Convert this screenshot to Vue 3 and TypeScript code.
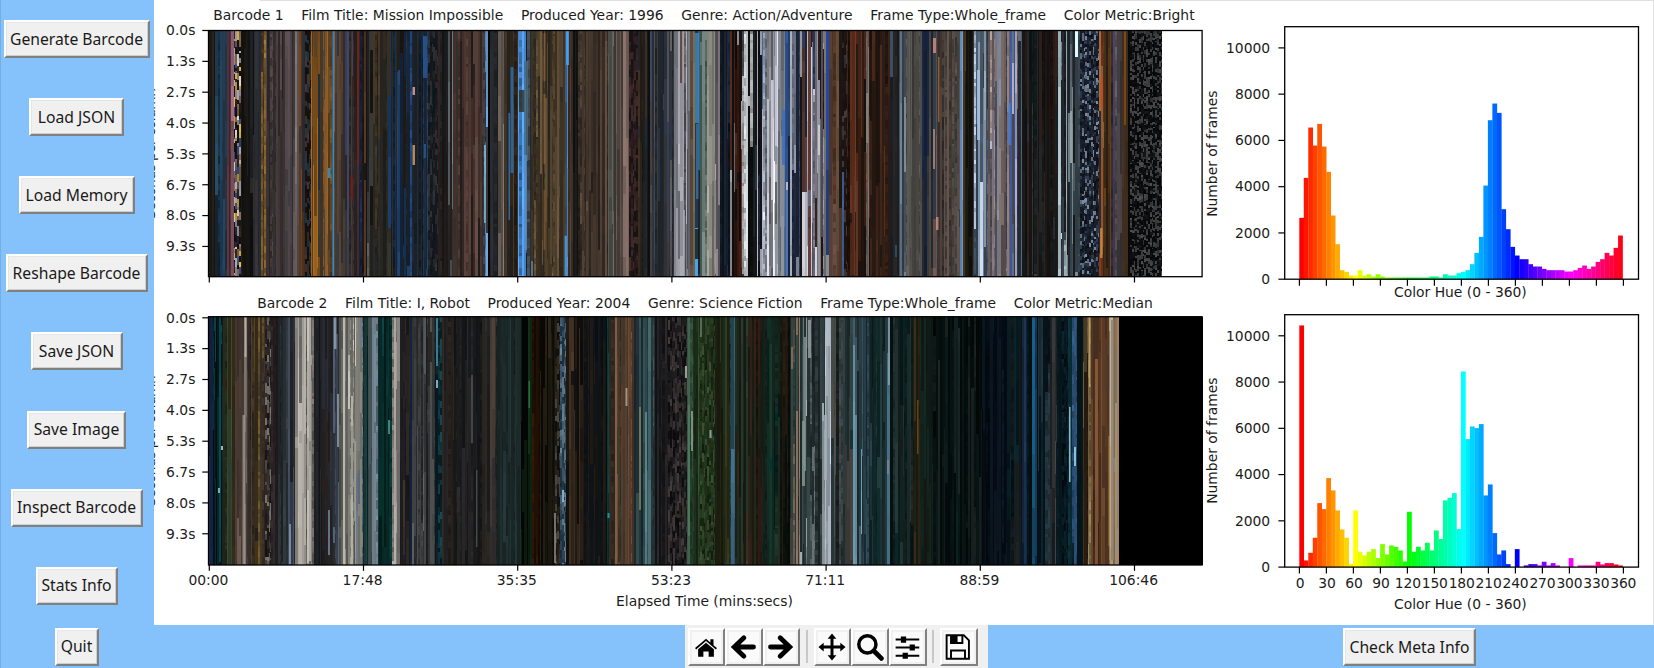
<script setup lang="ts">
interface Cell { x: number; y: number; w: number; h: number; c: string }
type Patch = [number, number, number, number, string]

const actions = ['Generate Barcode', 'Load JSON', 'Load Memory', 'Reshape Barcode', 'Save JSON', 'Save Image', 'Inspect Barcode', 'Stats Info', 'Quit']
const widths = [146, 95, 116, 142, 92, 99, 132, 82, 44]

const secs = ['0.0s', '1.3s', '2.7s', '4.0s', '5.3s', '6.7s', '8.0s', '9.3s']
const times = ['00:00', '17:48', '35:35', '53:23', '71:11', '88:59', '106:46']
const timeX = (i: number) => 209 + i * 154.2

// Each zone: right edge, palette, optional texture (n = flickering, d = dotted, z = static)
const zonesA = `215 1c1a17 221c14;222 1b3246 14202a 1f4058;227 24303c 1c3a55;231 553038 46303a;233.5 60404a 8a5a70;241 cfc0b0 111111 7a6050 3a4a70 c8a840 2a2025 14141a 9a98a8 n;248 15130f 1d1a18;255 22252b 2f2c2c 111111;261 2d2d33 262a30;266 6b5129 7a5c2a 3c3228;283 3f3536 352c2a 4a3f42 393436;293 4b4144 42393c 403a3e;299 66605f 50484a;305 432c1c 2a2a30 5c3518;311 3a3030 24303c 151110 n;318 a0651f 8a5418 6c4a24;325 6b4826 4a4238 7a4a1c 24303c;332 7b5228 6a4a2a 8a5c24;334 2d6a92 2a5878;343 4a3c32 2c3440 6a4a34;353 35302c 3a3d5a 2a2624;360 5a2520 40201c 302830 3a2c2c;362 26407a 203050;367 4a3020 1a1614;373 1a1c1c 2a2a28 4a4a48;387 262420 33302a 1e2428 3c3020;397 1c2530 2c2c20 1a3050 2c2820;407 162c48 1c3b60 201c1a 2c2820;423 14202e 1c3a64 20242a 1a2634;428 2a5080 1c2a3a;438 101820 1a1c20 2a2c30 n;448 241e1a 2a1c18 1c1f22;453 4a4644 586266 2a2826;483 3a2a24 4a3430 2a2622 55403a;488 5a80a8 30343c;490 0a0a0a;498 1e2226 26282c;504 6a6058 4a443e;518 332a20 2c2824 3e3226;526 4a90dc 458ad2 5898e0;533 4a5a68 2c2822 2c2822;565 4a3c28 3c3020 5a4a34 2c2820;568 4f82c8 4a6888;573 44362c;578 0d0f0f 151514;608 4b3c32 54443a 3c3028 5c4c3a;617 5a5e56 66605a 4a443e;623 4a403c;629 806a60 6c5a54;638 2a1a1c 181416 3a2626 n;648 33281c 202428;650 0c0c0c;674 3a3a3e 2a3038 4a4648 2f3a4c;690 8a8a90 9a9aa4 6a6c74;695 5a5440 5c4a40;700 3a80b4 2a5878 203040;707 6a7a74 50645c;715 7a7c74 8a8a80;720 4a4a50 8c8088;730 142030 1e2c3c 101820;742 2c140e 50281c 101012 8a8a8c;748 9a9ea0 c0c4c6 3a4448;755 101412 d0d4d4 141c1a;762 2a3040 90949c 14141c;767 8a92a0 b0b8c8 4a80a8;778 a8acb4 d0d0dc 7a7c84;785 808690 a0a8b4;792 2a4a80 14203c 9aa0ac;800 3a4a6a 8a92a4 1c2436 606878;815 6a6a78 a0a0ac 503430 2c3858 c0c0c8 1c1a20;826 2a1c1a 8a8890 b8b8c4 5a5a66;829 2a4a90 889098;833 5a4038 402c22;842 4a3020 5a4438 2c2018;847 1c1412 1c1412 3a3434 n;866 4a2416 3a1c10 5a3424 241610;869 7a706c 604a44;890 4a2a1c 281a12 3a2218 18110e;900 1c2026 3a5068 282624;906 6a7884 3a4450;922 44423f 4a4844;931 1c2c4a 1a3a68 2a2c34 44403c;938 5a4a44 2c3440;960 484440 4e4642 403c38 54443e;963 5a7ca8;966 5a4a20 302818;973 141210 242018;988 8aa0bc 5a7088 a8b4c4 3c4854;1010 6a6268 8a7a74 4a4448 808aa0 5a5054;1022 3a4a80 4a5a70 8a8a98 383c44;1058 141414 1c1e20 2a1c18 101a1c 222424 30302e;1080 3c4e58 6a7880 a8bcc4 2a3238 1c2024;1099 1c2430 0e1218 6c7c90 2c3c50 141a28 1a1c28 d;1104 b87a48 5a3018 8a4020 3a2c2c;1111 5a3a14 3a2a18;1115 3c3448 2c3048;1122 5a5458 484448;1128 7a4a1a 3a2a1c;1130 0a0a0a;1161.5 060809 101416 0a0c0e 3a3a3a 444444 z`
const zonesB = `212.5 1c2c58 142040;223 041418 06282c 0a3a3c 021012;227 3a2a1c 20301c;235 3c3a20 2a3a2c 2a2818;242 3a2e28 584a42;247 4a4038 706860 403830;252 4a4038 3a302c;265 5a4624 463a24 3a3028;271 1a1616 4a4440 302c28 706a64 2a2422 n;278 2a2224 3a3438;288 20262a 2c3236;295 2a2c30 3c4656;314 8a8880 a8a49c 989490 6e6c68;320 1a1c20 1c1e22;333 1e1c1c 24262c 2a1e14;339 22262c 4a5668;343 4a4c48 5a5c58;356 8e8c82 a4a298 70706a 7c7b75;363 5a6270 6e6e68;368 0a2a2a 1a3c3c;372 505a5c 405050;377.5 8fa6b8 a0b4c0;392 062420 0a302e 0c3a38;400 6c6a66 8a8480;410 2c2624 1a1a1c;412 16284a;435 3c3e40 303234 4c4e50 2a2826;438 0a2228 1c3038;442 0c3038 14404c 0a2228 081c20 n;453 28221e 202022;485 1c1e20 24221f 18191c 2a2a2c;497 28282a 242220 3a322c;521 1c2a2a 203232 1a2424;528 020604 0a1a0c;532 123018 0a1c10;540 2a1404 1c0e04;555 14140c 261e14 0c0a06;560 2c2418 101010 40403a 201c16 n;566 3a5468 5c7484 1c3040 283c4c n;583 241c14 3a2c20 141210;607 101214 1a1612 0c1014;609 083834 062824;615 28201c 302820;634 5c4230 503c2e 6a4c38 4a4030;643 1c2a30 2c4040;654 3c5c60 4a6c70 2a4448;662 16181a 222224;668 1a1a1c 242222;687 1a1a1c 302a2a 0e0e10 3a3434 1e1c1e n;693 3c5c48 2a4834;700 1c3018 2c4424 203420;715 1c3018 243c20 142010 34482c 26341c n;730 2a2a14 1c1e10 22301c;735 33556a 1c2c2c 203c44;750 182018 202c20 33281c;762 2a1a14 1c1c14 1a2418;780 0a1c18 14241c 063028 1c2c20;790 1a1c10 0c1410 2c2014;800 6a5c50 4a4a44 2a3a36;815 2c3a3c 8a9898 1c2628 5a6868;825 303c3e a0acac 38444a 202c2c;831 a8b4c0 c0c8d4 2c3434;853 1c2a2c 2c3c3e 4a4c46 3c3836;863 5c8494 3a5058 203034;873 1c3038 28404a 142226;887 0c2020 1a2c2e;890 3c5a6c 24303c;913 06181a 0a2424 14201e 20302e;920 2c2414 1a1c14;933 14241c 0c1c18 1c1a16 162c24;983 061412 0a1c1a 040c0c 182020 040a08;1007 040a14 06101c 0a141c;1022 06181c 0a242c 1a2022;1027 1c2c48 10243c;1032 041418;1037 14486a 1a5274 103c58;1050 0a1c24 1c2c34 061018;1057 3a4042 28282a 142028;1062 061820 081c24;1068 040c12 0a2028 061820 n;1072 0a2830 10303c;1077 2a5888 3a6a9c 0c2434;1083 041418;1088 4a3c28 2a1c10 786848;1091 9a885c 786440;1109 5c3c24 4a3020 6a462c 3c2a1c;1118.5 8a7a64 a89c88 9a7a54;1202 000000`

const patchesA: Patch[] = [
  [412.5, 87, 2.5, 8, '#e0a8a8'], [412.5, 145, 2.5, 20, '#d0a070'], [510.5, 67, 3, 106, '#2f6fac'], [508.5, 113, 1.5, 107, '#3a74b0'],
  [519, 90, 6, 22, '#333026'], [524, 61, 4, 100, '#4a6a80'], [524, 155, 3, 95, '#5a8cc4'], [543.5, 33, 2, 48, '#8a5c38'], [543.5, 94, 2, 70, '#84603c'],
  [543.5, 190, 2, 60, '#7a5230'], [566, 31, 3, 34, '#4ea4ec'], [564.5, 236, 2.5, 40, '#4b98da'], [695, 33, 4, 90, '#4386b4'], [696, 124, 2.5, 75, '#3a7298'],
  [695, 229, 4, 30, '#191a18'], [484, 145, 2, 78, '#88bcd0'], [423, 36, 4, 42, '#2a5a98'], [350.5, 175, 2.5, 25, '#6c2014'], [328, 168, 2.5, 10, '#3098d8'],
  [1008.5, 103, 2, 42, '#3f86e8'], [977, 70, 3, 70, '#a9c4ec'], [978, 140, 2, 90, '#7894b4'], [1100.5, 76, 2, 32, '#c44a1c'], [1100, 228, 2.5, 30, '#d08a40'],
  [938, 57, 1.5, 65, '#9a6a34'], [933, 38, 3, 15, '#d88c80'], [933, 129, 2, 40, '#b08a78'], [936, 217, 2.5, 13, '#d08c84'], [842, 172, 2, 104, '#4668a0'],
  [866, 93, 2.5, 50, '#8a8682'], [771, 80, 2.7, 120, '#d6d6e2'], [775, 66, 2.7, 80, '#c9cad6'], [782, 110, 3, 55, '#3f6cb8'], [785, 190, 3, 86, '#3a64a4'],
  [826, 31, 3, 110, '#2747a0'], [818, 125, 2, 30, '#d8d4d4'], [680, 31, 2, 52, '#5a3c38'], [683, 210, 2, 66, '#a8a8b0'],
]
const patchesB: Patch[] = [
  [244.5, 317, 2, 40, '#c4bab0'], [242.5, 415, 2.5, 149, '#98928e'], [471, 375, 2, 68, '#4c4e50'], [476, 470, 1.5, 77, '#505254'], [1069, 407, 1.5, 75, '#a4d4e4'],
  [1074, 447, 2, 19, '#a0d8e8'], [917, 400, 1.5, 54, '#7a4c18'], [888, 317, 2, 68, '#8ba4b0'], [289, 524, 2, 40, '#8b98b0'], [337, 394, 2, 53, '#8b9ca8'],
  [334, 317, 2.5, 32, '#94a4b4'], [328, 510, 2, 45, '#74849a'], [528.5, 381, 1.5, 27, '#2b8040'], [625.5, 388, 2, 18, '#b6a690'], [639, 407, 2, 103, '#7c8060'],
  [607.5, 513, 2, 5, '#14b0a8'], [221, 446, 2, 4, '#b8dcd4'], [218, 488, 2, 5, '#80d8c8'], [388, 420, 2, 14, '#4c9a8c'], [436, 318, 2, 48, '#4c8ca0'],
  [436, 380, 2, 8, '#a0c8e0'], [562, 490, 2, 12, '#9ac4e0'], [554, 513, 2, 50, '#8a8484'], [691, 411, 2, 40, '#8aa490'], [685, 366, 2, 12, '#c0b4a8'],
  [826, 318, 4, 28, '#b4c0cc'], [824, 415, 3, 65, '#a4b0b8'], [808, 320, 3, 38, '#9ca0a8'], [802, 421, 3, 65, '#84988c'], [887, 460, 2, 14, '#80848c'],
  [1089, 317, 1.5, 70, '#c8b070'], [1108.5, 436, 1.5, 110, '#b08850'], [1111, 320, 3, 240, '#8c8070'], [709.5, 430, 2, 8, '#a0bcb0'], [700, 317, 2, 20, '#687868'],
]

function mix(hex: string, f: number): string {
  const part = (i: number) => Math.max(0, Math.min(255, Math.round(parseInt(hex.slice(i, i + 2), 16) * f)))
  return `rgb(${part(0)},${part(2)},${part(4)})`
}

function weave(src: string, top: number, bottom: number, seed: number): Cell[] {
  let s = seed
  const rnd = () => { s = (s * 1664525 + 1013904223) % 4294967296; return s / 4294967296 }
  const cells: Cell[] = []
  let x = 209
  for (const zone of src.split(';')) {
    const parts = zone.split(' ')
    const end = Number(parts[0])
    const mode = parts[parts.length - 1].length === 1 ? parts.pop()! : 's'
    const pal = parts.slice(1)
    while (x < end - 0.4) {
      const w = pal[0] === '000000' ? end - x : Math.min(mode === 's' ? 1 + rnd() * 1.7 : 1.8, end - x)
      let y = top
      let base = pal[Math.floor(rnd() * pal.length)]
      const tone = 0.7 + rnd() * 0.55
      const dashed = mode === 's' && rnd() < 0.16
      while (y < bottom) {
        const len = mode === 's' ? (dashed ? 2 + rnd() * 7 : 10 + rnd() * rnd() * 150) : mode === 'n' ? 2 + rnd() * 8 : mode === 'd' ? 2 + rnd() * 2.5 : 1.5 + rnd() * 2
        if (mode !== 's' || rnd() < (dashed ? 0.05 : 0.36)) base = pal[Math.floor(rnd() * pal.length)]
        const h = Math.min(len, bottom - y)
        const k = mode === 's' ? tone * (dashed ? 0.72 + rnd() * 0.4 : 0.88 + rnd() * 0.24) : 0.8 + rnd() * 0.35
        cells.push({ x, y, w: w + 0.5, h: h + 0.3, c: mix(base, k) })
        y += len
      }
      x += w
    }
    x = end
  }
  return cells
}

const barcodes = [
  { top: 30.5, bottom: 276.7, tick: 30.5, axis: 153.5, cells: weave(zonesA, 31, 276.5, 7), patches: patchesA, from: 213.3, len: 981.3, base: 20.2,
    title: ['Barcode 1', 'Film Title: Mission Impossible', 'Produced Year: 1996', 'Genre: Action/Adventure', 'Frame Type:Whole_frame', 'Color Metric:Bright'] },
  { top: 316.7, bottom: 565, tick: 317.8, axis: 440.7, cells: weave(zonesB, 317, 565, 23), patches: patchesB, from: 257.2, len: 895.6, base: 307.8,
    title: ['Barcode 2', 'Film Title: I, Robot', 'Produced Year: 2004', 'Genre: Science Fiction', 'Frame Type:Whole_frame', 'Color Metric:Median'] },
]
const gap = '\u00a0'.repeat(4)

const hues = Array.from({ length: 13 }, (_, i) => i * 30)
const counts = [0, 2000, 4000, 6000, 8000, 10000]
const histograms = [
  { top: 26.7, bottom: 279.2, caption: 297, axis: 153.7, labels: false,
    bars: [184, 304, 455, 401, 466, 398, 322, 191, 105, 27, 22, 11, 11, 27, 11, 15, 8, 15, 8, 5, 5, 5, 5, 5, 5, 5, 5, 5, 5, 8, 8, 5, 15, 11, 11, 18, 22, 27, 45, 79, 127, 281, 477, 527, 499, 210, 150, 97, 71, 60, 60, 45, 38, 38, 31, 27, 27, 27, 27, 23, 23, 27, 34, 41, 31, 38, 52, 60, 79, 71, 94, 131] },
  { top: 314.7, bottom: 567.1, caption: 609.4, axis: 440.7, labels: true,
    bars: [725, 20, 43, 88, 192, 174, 267, 230, 170, 113, 88, 9, 170, 46, 35, 46, 54, 27, 69, 38, 65, 61, 50, 17, 166, 46, 61, 50, 73, 50, 110, 84, 200, 208, 222, 114, 587, 384, 422, 417, 429, 215, 248, 102, 38, 50, 9, 0, 54, 0, 5, 9, 9, 5, 16, 5, 12, 5, 0, 0, 27, 0, 5, 5, 5, 5, 16, 8, 12, 12, 8, 5] },
]
</script>

<template>
  <div class="window">
    <nav class="sidebar">
      <div v-for="(a, i) in actions" :key="a" class="slot">
        <button class="tk" :style="{ width: widths[i] + 'px' }">{{ a }}</button>
      </div>
    </nav>
    <main class="stage">
      <svg class="figure" width="1500" height="625" viewBox="154 0 1500 625">
        <path d="M260 .5H1654M1653.5 0V625" stroke="#e0e0e0" fill="none" />
        <g v-for="b in barcodes" :key="b.base">
          <text :x="b.from" :y="b.base" :textLength="b.len">{{ b.title.join(gap) }}</text>
          <g shape-rendering="crispEdges">
            <rect v-for="(c, i) in b.cells" :key="i" :x="c.x" :y="c.y" :width="c.w" :height="c.h" :fill="c.c" />
          </g>
          <rect v-for="(p, i) in b.patches" :key="'p' + i" :x="p[0]" :y="p[1]" :width="p[2]" :height="p[3]" :fill="p[4]" opacity=".82" />
          <rect class="frame" x="208.5" :y="b.top" width="993.6" :height="b.bottom - b.top" />
          <g v-for="(t, i) in secs" :key="t">
            <path class="tick" :d="`M202.3 ${b.tick + i * 30.85}H208`" />
            <text x="195.4" :y="b.tick + i * 30.85 + 4.8" text-anchor="end">{{ t }}</text>
          </g>
          <path v-for="(t, i) in times" :key="t" class="tick" :d="`M${timeX(i) + 0.3} ${b.bottom}v5.8`" />
          <text :transform="`translate(154.8 ${b.axis}) rotate(-90)`" text-anchor="middle" textLength="131">Seconds per column</text>
        </g>
        <text v-for="(t, i) in times" :key="t" :x="timeX(i) - 0.6" y="585.4" text-anchor="middle">{{ t }}</text>
        <text x="704.5" y="605.6" text-anchor="middle">Elapsed Time (mins:secs)</text>

        <g v-for="h in histograms" :key="h.top">
          <rect v-for="(v, i) in h.bars" :key="i" :x="1299.3 + i * 4.49" :y="h.bottom - v / 3" width="4.75" :height="v / 3" :fill="`hsl(${i * 5} 100% 50%)`" />
          <rect class="frame" x="1284.7" :y="h.top" width="353.8" :height="h.bottom - h.top" />
          <g v-for="n in counts" :key="n">
            <path class="tick" :d="`M1278.4 ${h.bottom - n * 0.02313}h6`" />
            <text x="1270.2" :y="h.bottom - n * 0.02313 + 4.7" text-anchor="end">{{ n }}</text>
          </g>
          <g v-for="(d, i) in hues" :key="d">
            <path class="tick" :d="`M${1299.4 + i * 27} ${h.bottom}v6.5`" />
            <text v-if="h.labels" class="hue" :x="1300.1 + i * 26.93" y="588" text-anchor="middle">{{ d }}</text>
          </g>
          <text x="1460.4" :y="h.caption" text-anchor="middle">Color Hue (0 - 360)</text>
          <text :transform="`translate(1217 ${h.axis}) rotate(-90)`" text-anchor="middle">Number of frames</text>
        </g>
      </svg>
      <footer class="bottom">
        <div class="toolbar">
          <button class="tool" aria-label="Home"><svg viewBox="0 0 32 32"><path d="M16 6.6 3.5 17.2l1.2 1.6L16 9.2l11.3 9.6 1.2-1.6-3.9-3.3V7H21v3.8zM16 11 7 18.6V27h6v-6h6v6h6v-8.4z" /></svg></button>
          <button class="tool" aria-label="Back"><svg viewBox="0 0 32 32"><path d="M17 5.5 6 16l11 10.5M7 16h21" class="line thick" /></svg></button>
          <button class="tool" aria-label="Forward"><svg viewBox="0 0 32 32"><path d="M15 5.5 26 16 15 26.5M25 16H4" class="line thick" /></svg></button>
          <i class="sep"></i>
          <button class="tool" aria-label="Pan"><svg viewBox="0 0 32 32"><path d="m16 .5 5 6h-3.3v7.8h7.8V11l6 5-6 5v-3.3h-7.8v7.8H21l-5 6-5-6h3.3v-7.8H6.5V21l-6-5 6-5v3.3h7.8V6.5H11z" /></svg></button>
          <button class="tool" aria-label="Zoom"><svg viewBox="0 0 32 32"><circle cx="13" cy="13" r="9.8" class="line" /><path d="m20.5 20.5 8.5 8.5" class="line thick" /></svg></button>
          <button class="tool" aria-label="Subplots"><svg viewBox="0 0 32 32"><path d="M3 7.5h27M3 16.5h27M3 26h27" class="line thin" /><path d="M9 4h6v7H9zM19 13h6v7h-6zM11 22.5h6v7h-6z" /></svg></button>
          <i class="sep"></i>
          <button class="tool" aria-label="Save"><svg viewBox="0 0 32 32"><path d="M3 2.5h19.5l6 6V29.500H3zM8 29V20h16v9M21 3v8.500H8V3" class="line thin" /><path d="M8 3h7.500v9H8z" /></svg></button>
        </div>
        <button class="tk meta">Check Meta Info</button>
      </footer>
    </main>
  </div>
</template>

<style>
body { margin: 0; overflow: hidden; }
</style>

<style scoped>
.window { box-sizing: border-box; display: grid; grid-template-columns: 154px 1500px; width: 1654px; height: 668px; background: #85c1fb; }
.sidebar { display: grid; grid-template-rows: repeat(8, 78.1px) 43px; border-left: 1px solid #75ade5; padding-right: 2px; }
.slot { display: flex; align-items: center; justify-content: center; }
.slot:last-child { padding-top: 1px; }
.tk { box-sizing: border-box; height: 38px; padding: 0 0 1px; background: #f0f0f0; border: 2px solid; border-color: #fff #808080 #808080 #fff; box-shadow: inset -1px -1px #cfcfcf, inset 1px 1px #e6e6e6; color: #1a1a1a; font: 15.7px "Noto Sans", sans-serif; white-space: nowrap; display: flex; align-items: center; justify-content: center; }
.stage { display: grid; grid-template-rows: 625px 43px; }
.figure { display: block; background: #fff; overflow: hidden; fill: #1c1c1c; font: 13.89px "DejaVu Sans", sans-serif; }
.hue { letter-spacing: -0.15px; }
.frame { fill: none; stroke: #000; stroke-width: 1.3; }
.tick { stroke: #000; stroke-width: 1.2; fill: none; }
.bottom { display: flex; align-items: flex-start; }
.toolbar { box-sizing: border-box; flex: none; width: 303px; height: 43px; margin-left: 531px; padding: 3px 0 0 2.5px; background: #f0f0f0; display: flex; }
.tool { box-sizing: border-box; flex: none; width: 37.6px; height: 37.5px; padding: 0 1px 0 0; background: #fafafa; border: 2px solid; border-color: #fff #808080 #808080 #fff; box-shadow: inset 0 0 0 2px #f0f0f0; display: flex; align-items: center; justify-content: center; }
.tool svg { flex: none; width: 28px; height: 28px; fill: #000; }
.tool .line { fill: none; stroke: #000; stroke-width: 4; }
.tool .thick { stroke-width: 5.5; stroke-linecap: round; }
.tool .thin { stroke-width: 2.2; }
.sep { flex: none; width: 2px; height: 33px; margin: 2px 6px 0 5.500px; background: #c8c8c8; }
.meta { width: 133px; margin: 3px 0 0 355px; }
</style>
